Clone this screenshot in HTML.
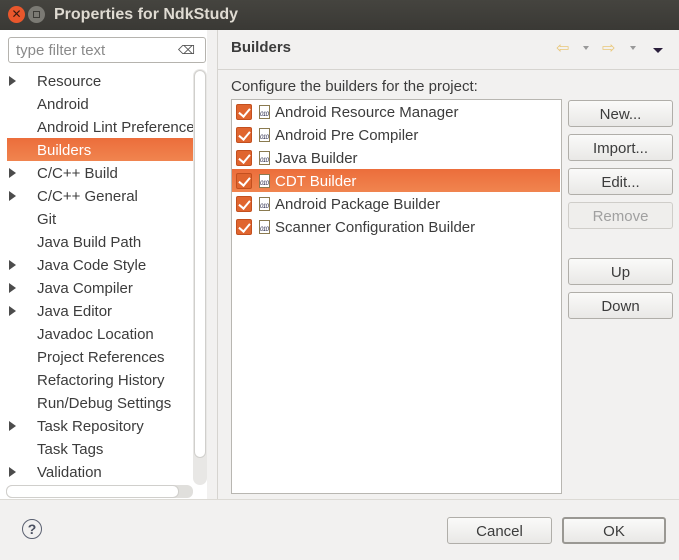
<!DOCTYPE html><html><head><style>
*{margin:0;padding:0;box-sizing:border-box}
body{width:679px;height:560px;background:#f2f1f0;font-family:"Liberation Sans","DejaVu Sans",sans-serif;font-size:15px;color:#3c3c3c;position:relative;overflow:hidden}
.a{position:absolute}
.title{left:0;top:0;width:679px;height:30px;background:linear-gradient(#45443f,#3a3935);color:#dfdbd2;font-weight:bold;font-size:16px}
.tr{left:0;height:23px;width:193px;line-height:26px;padding-left:37px;white-space:nowrap;overflow:hidden}
.arr{position:absolute;left:9px;top:7px;width:0;height:0;border-left:7px solid #4c4c4c;border-top:5px solid transparent;border-bottom:5px solid transparent}
.sel{background:linear-gradient(#ec6d3b,#f0844f);color:#fff}
.row{left:232px;width:328px;height:23px;line-height:26px;padding-left:43px;white-space:nowrap}
.cb{position:absolute;left:4px;top:4px;width:16px;height:16px;background:#e0652f;border:1px solid #c3501f;border-radius:2px}
.cb:after{content:"";position:absolute;left:4px;top:1px;width:5px;height:9px;border:solid #fff;border-width:0 2px 2px 0;transform:rotate(40deg)}
.ic{position:absolute;left:27px;top:5px;width:11px;height:14px;border:1px solid #8a7a50;background:#fff;font-size:6px;line-height:6px;padding-top:6px;color:#224;letter-spacing:-0.5px}
.btn{left:568px;width:105px;height:27px;border:1px solid #b0aea9;border-radius:3px;background:linear-gradient(#fafaf9,#e9e8e6);text-align:center;line-height:27px;color:#3c3c3c}
</style></head><body>
<div class="a title">
<div class="a" style="left:8px;top:6px;width:17px;height:17px;border-radius:50%;background:#e9572c;color:#3a1a10;font-size:12px;line-height:17px;text-align:center">✕</div>
<div class="a" style="left:28px;top:6px;width:17px;height:17px;border-radius:50%;background:#7b7a74"><div class="a" style="left:5px;top:5px;width:7px;height:7px;border:1px solid #3c3b37"></div></div>
<div class="a" style="left:54px;top:6px">Properties for NdkStudy</div></div>
<div class="a" style="left:0;top:30px;width:207px;height:470px;background:#fff"></div>
<div class="a" style="left:8px;top:37px;width:198px;height:26px;border:1px solid #b5b3ae;border-radius:3px;background:#fff;color:#8a8a8a;padding-left:7px;line-height:25px">type filter text<span class="a" style="left:169px;top:0;color:#555;font-size:12px">⌫</span></div>
<div class="a" style="left:193px;top:69px;width:14px;height:416px;background:#e8e7e5;border-radius:7px"><div style="margin:1px;height:388px;background:#fff;border:1px solid #d0cfcc;border-radius:6px"></div></div>
<div class="a" style="left:6px;top:485px;width:187px;height:13px;background:#e0dfdc;border-radius:6px"><div style="width:173px;height:13px;background:#fff;border:1px solid #d0cfcc;border-radius:6px"></div></div>
<div class="a tr" style="top:69px"><i class="arr"></i>Resource</div>
<div class="a tr" style="top:92px">Android</div>
<div class="a tr" style="top:115px">Android Lint Preferences</div>
<div class="a tr sel" style="top:138px;left:7px;width:186px;padding-left:30px">Builders</div>
<div class="a tr" style="top:161px"><i class="arr"></i>C/C++ Build</div>
<div class="a tr" style="top:184px"><i class="arr"></i>C/C++ General</div>
<div class="a tr" style="top:207px">Git</div>
<div class="a tr" style="top:230px">Java Build Path</div>
<div class="a tr" style="top:253px"><i class="arr"></i>Java Code Style</div>
<div class="a tr" style="top:276px"><i class="arr"></i>Java Compiler</div>
<div class="a tr" style="top:299px"><i class="arr"></i>Java Editor</div>
<div class="a tr" style="top:322px">Javadoc Location</div>
<div class="a tr" style="top:345px">Project References</div>
<div class="a tr" style="top:368px">Refactoring History</div>
<div class="a tr" style="top:391px">Run/Debug Settings</div>
<div class="a tr" style="top:414px"><i class="arr"></i>Task Repository</div>
<div class="a tr" style="top:437px">Task Tags</div>
<div class="a tr" style="top:460px"><i class="arr"></i>Validation</div>
<div class="a" style="left:217px;top:30px;width:1px;height:469px;background:#d6d4d0"></div>
<div class="a" style="left:218px;top:69px;width:461px;height:1px;background:#d6d4d0"></div>
<div class="a" style="left:0;top:499px;width:679px;height:1px;background:#dcdad5"></div>
<div class="a" style="left:231px;top:39px;font-weight:bold;font-size:15px">Builders</div>
<div class="a" style="left:556px;top:38px;color:#e9c77a;font-size:16px">⇦</div><div class="a" style="left:583px;top:46px;width:0;height:0;border:3px solid transparent;border-top:4px solid #999"></div>
<div class="a" style="left:602px;top:38px;color:#e9c77a;font-size:16px">⇨</div><div class="a" style="left:630px;top:46px;width:0;height:0;border:3px solid transparent;border-top:4px solid #999"></div>
<div class="a" style="left:653px;top:48px;width:0;height:0;border:5px solid transparent;border-top:5px solid #2b1f3c"></div>
<div class="a" style="left:231px;top:78px">Configure the builders for the project:</div>
<div class="a" style="left:231px;top:99px;width:331px;height:395px;background:#fff;border:1px solid #b8b6b1"></div>
<div class="a row" style="top:100px"><i class="cb"></i><i class="ic">010</i>Android Resource Manager</div>
<div class="a row" style="top:123px"><i class="cb"></i><i class="ic">010</i>Android Pre Compiler</div>
<div class="a row" style="top:146px"><i class="cb"></i><i class="ic">010</i>Java Builder</div>
<div class="a row sel" style="top:169px"><i class="cb"></i><i class="ic">010</i>CDT Builder</div>
<div class="a row" style="top:192px"><i class="cb"></i><i class="ic">010</i>Android Package Builder</div>
<div class="a row" style="top:215px"><i class="cb"></i><i class="ic">010</i>Scanner Configuration Builder</div>
<div class="a btn" style="top:100px">New...</div>
<div class="a btn" style="top:134px">Import...</div>
<div class="a btn" style="top:168px">Edit...</div>
<div class="a btn" style="top:202px;color:#a0a0a0;background:#efeeec;border-color:#cfcdc9">Remove</div>
<div class="a btn" style="top:258px">Up</div>
<div class="a btn" style="top:292px">Down</div>
<div class="a" style="left:22px;top:519px;width:20px;height:20px;border:1.5px solid #5a6070;border-radius:50%;text-align:center;line-height:18px;font-weight:bold;font-size:14px;color:#4a5060">?</div>
<div class="a btn" style="left:447px;top:517px;width:105px">Cancel</div>
<div class="a btn" style="left:562px;top:517px;width:104px;border:2px solid #9a9893;line-height:25px">OK</div>
</body></html>
